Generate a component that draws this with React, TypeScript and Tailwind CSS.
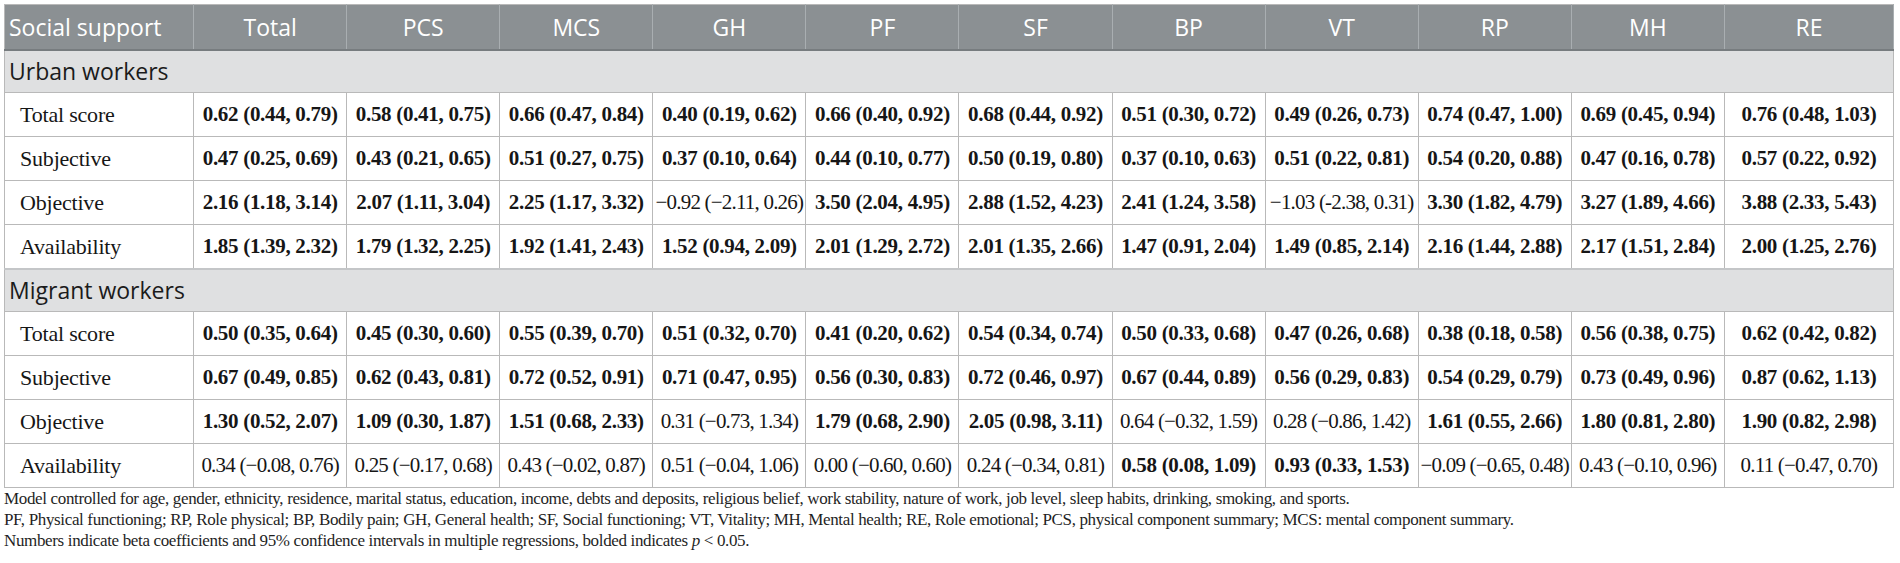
const cols = ["Total", "PCS", "MCS", "GH", "PF", "SF", "BP", "VT", "RP", "MH", "RE"];

type Cell = [string, boolean];

const groups: { name: string; rows: { label: string; cells: Cell[] }[] }[] = [
  {
    name: "Urban workers",
    rows: [
      {
        label: "Total score",
        cells: [
          ["0.62 (0.44, 0.79)", true],
          ["0.58 (0.41, 0.75)", true],
          ["0.66 (0.47, 0.84)", true],
          ["0.40 (0.19, 0.62)", true],
          ["0.66 (0.40, 0.92)", true],
          ["0.68 (0.44, 0.92)", true],
          ["0.51 (0.30, 0.72)", true],
          ["0.49 (0.26, 0.73)", true],
          ["0.74 (0.47, 1.00)", true],
          ["0.69 (0.45, 0.94)", true],
          ["0.76 (0.48, 1.03)", true],
        ],
      },
      {
        label: "Subjective",
        cells: [
          ["0.47 (0.25, 0.69)", true],
          ["0.43 (0.21, 0.65)", true],
          ["0.51 (0.27, 0.75)", true],
          ["0.37 (0.10, 0.64)", true],
          ["0.44 (0.10, 0.77)", true],
          ["0.50 (0.19, 0.80)", true],
          ["0.37 (0.10, 0.63)", true],
          ["0.51 (0.22, 0.81)", true],
          ["0.54 (0.20, 0.88)", true],
          ["0.47 (0.16, 0.78)", true],
          ["0.57 (0.22, 0.92)", true],
        ],
      },
      {
        label: "Objective",
        cells: [
          ["2.16 (1.18, 3.14)", true],
          ["2.07 (1.11, 3.04)", true],
          ["2.25 (1.17, 3.32)", true],
          ["\u22120.92 (\u22122.11, 0.26)", false],
          ["3.50 (2.04, 4.95)", true],
          ["2.88 (1.52, 4.23)", true],
          ["2.41 (1.24, 3.58)", true],
          ["\u22121.03 (-2.38, 0.31)", false],
          ["3.30 (1.82, 4.79)", true],
          ["3.27 (1.89, 4.66)", true],
          ["3.88 (2.33, 5.43)", true],
        ],
      },
      {
        label: "Availability",
        cells: [
          ["1.85 (1.39, 2.32)", true],
          ["1.79 (1.32, 2.25)", true],
          ["1.92 (1.41, 2.43)", true],
          ["1.52 (0.94, 2.09)", true],
          ["2.01 (1.29, 2.72)", true],
          ["2.01 (1.35, 2.66)", true],
          ["1.47 (0.91, 2.04)", true],
          ["1.49 (0.85, 2.14)", true],
          ["2.16 (1.44, 2.88)", true],
          ["2.17 (1.51, 2.84)", true],
          ["2.00 (1.25, 2.76)", true],
        ],
      },
    ],
  },
  {
    name: "Migrant workers",
    rows: [
      {
        label: "Total score",
        cells: [
          ["0.50 (0.35, 0.64)", true],
          ["0.45 (0.30, 0.60)", true],
          ["0.55 (0.39, 0.70)", true],
          ["0.51 (0.32, 0.70)", true],
          ["0.41 (0.20, 0.62)", true],
          ["0.54 (0.34, 0.74)", true],
          ["0.50 (0.33, 0.68)", true],
          ["0.47 (0.26, 0.68)", true],
          ["0.38 (0.18, 0.58)", true],
          ["0.56 (0.38, 0.75)", true],
          ["0.62 (0.42, 0.82)", true],
        ],
      },
      {
        label: "Subjective",
        cells: [
          ["0.67 (0.49, 0.85)", true],
          ["0.62 (0.43, 0.81)", true],
          ["0.72 (0.52, 0.91)", true],
          ["0.71 (0.47, 0.95)", true],
          ["0.56 (0.30, 0.83)", true],
          ["0.72 (0.46, 0.97)", true],
          ["0.67 (0.44, 0.89)", true],
          ["0.56 (0.29, 0.83)", true],
          ["0.54 (0.29, 0.79)", true],
          ["0.73 (0.49, 0.96)", true],
          ["0.87 (0.62, 1.13)", true],
        ],
      },
      {
        label: "Objective",
        cells: [
          ["1.30 (0.52, 2.07)", true],
          ["1.09 (0.30, 1.87)", true],
          ["1.51 (0.68, 2.33)", true],
          ["0.31 (\u22120.73, 1.34)", false],
          ["1.79 (0.68, 2.90)", true],
          ["2.05 (0.98, 3.11)", true],
          ["0.64 (\u22120.32, 1.59)", false],
          ["0.28 (\u22120.86, 1.42)", false],
          ["1.61 (0.55, 2.66)", true],
          ["1.80 (0.81, 2.80)", true],
          ["1.90 (0.82, 2.98)", true],
        ],
      },
      {
        label: "Availability",
        cells: [
          ["0.34 (\u22120.08, 0.76)", false],
          ["0.25 (\u22120.17, 0.68)", false],
          ["0.43 (\u22120.02, 0.87)", false],
          ["0.51 (\u22120.04, 1.06)", false],
          ["0.00 (\u22120.60, 0.60)", false],
          ["0.24 (\u22120.34, 0.81)", false],
          ["0.58 (0.08, 1.09)", true],
          ["0.93 (0.33, 1.53)", true],
          ["\u22120.09 (\u22120.65, 0.48)", false],
          ["0.43 (\u22120.10, 0.96)", false],
          ["0.11 (\u22120.47, 0.70)", false],
        ],
      },
    ],
  },
];

const sans = "font-['Open_Sans',sans-serif]";
const serif = "font-['Liberation_Serif',serif]";

export default function App() {
  return (
    <div className="w-[1900px] h-[563px] bg-white pt-[4px] pl-[4px] overflow-hidden">
      <table className="table-fixed border-collapse w-[1890px] border border-[#b9b9b9]">
        <colgroup>
          <col className="w-[189px]" />
          {cols.map((c, i) => (
            <col key={c} className={i === cols.length - 1 ? "w-[169px]" : "w-[153px]"} />
          ))}
        </colgroup>
        <thead>
          <tr className={`h-[45px] bg-[#8b9093] text-white text-[23px] ${sans} border-b-2 border-b-[#777c7f]`}>
            <th className="font-normal text-left pl-[4px] border-r border-[#a9aeb1] whitespace-nowrap">
              Social support
            </th>
            {cols.map((c) => (
              <th key={c} className="font-normal text-center border-r border-[#a9aeb1]">
                {c}
              </th>
            ))}
          </tr>
        </thead>
        <tbody>
          {groups.map((g) => (
            <>
              <tr key={g.name} className="h-[43px] bg-[#dfe0e1] border-t-2 border-[#c4c6c8] border-b border-b-[#b9b9b9]">
                <td colSpan={12} className={`pl-[4px] text-[23px] text-[#1b1b1b] ${sans}`}>
                  {g.name}
                </td>
              </tr>
              {g.rows.map((r) => (
                <tr key={g.name + r.label} className={`h-[44px] ${serif} text-[#161616]`}>
                  <td className="pl-[15px] text-[22px] tracking-[-0.2px] border border-[#b9b9b9] whitespace-nowrap">
                    {r.label}
                  </td>
                  {r.cells.map(([v, b], i) => (
                    <td
                      key={i}
                      className={`text-center whitespace-nowrap border border-[#b9b9b9] ${
                        b ? "font-bold text-[21px] tracking-[-0.3px]" : "text-[21px] tracking-[-0.8px]"
                      }`}
                    >
                      {v}
                    </td>
                  ))}
                </tr>
              ))}
            </>
          ))}
        </tbody>
      </table>
      <div className={`${serif} text-[17px] leading-[21px] text-[#1f1f1f] tracking-[-0.35px]`}>
        <p>
          Model controlled for age, gender, ethnicity, residence, marital status, education, income, debts and deposits,
          religious belief, work stability, nature of work, job level, sleep habits, drinking, smoking, and sports.
        </p>
        <p>
          PF, Physical functioning; RP, Role physical; BP, Bodily pain; GH, General health; SF, Social functioning; VT,
          Vitality; MH, Mental health; RE, Role emotional; PCS, physical component summary; MCS: mental component summary.
        </p>
        <p>
          Numbers indicate beta coefficients and 95% confidence intervals in multiple regressions, bolded indicates{" "}
          <i>p</i> &lt; 0.05.
        </p>
      </div>
    </div>
  );
}
